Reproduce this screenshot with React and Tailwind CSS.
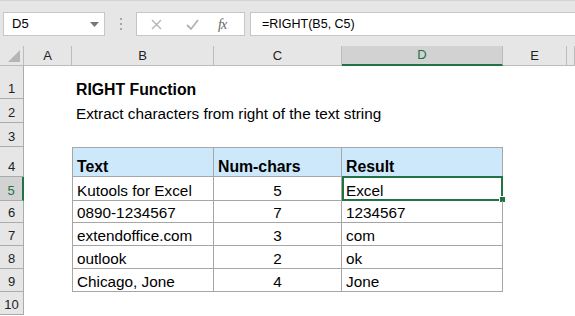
import React from "react";

const columns = [
  { key: "A", width: "w-[48px]" },
  { key: "B", width: "w-[142px]" },
  { key: "C", width: "w-[128px]" },
  { key: "D", width: "w-[161px]" },
  { key: "E", width: "w-[64px]" },
  { key: "F", width: "flex-1" },
];

const tableRows = [
  { text: "Kutools for Excel", num: "5", result: "Excel" },
  { text: "0890-1234567", num: "7", result: "1234567" },
  { text: "extendoffice.com", num: "3", result: "com" },
  { text: "outlook", num: "2", result: "ok" },
  { text: "Chicago, Jone", num: "4", result: "Jone" },
];

const rowHeights = ["h-[24px]", "h-[22px]", "h-[23px]", "h-[23px]", "h-[23px]"];

function RowHeader({ label, height, active }) {
  return (
    <div
      className={
        "w-[24px] shrink-0 flex items-end justify-center pb-[2px] text-[13px] leading-[14px] border-b " +
        height +
        (active
          ? " bg-[#d2d2d2] border-b-[#ababab] border-r-2 border-r-[#217346] text-[#217346]"
          : " bg-[#e6e6e6] border-b-[#ababab] border-r border-r-[#ababab] text-[#222]")
      }
    >
      {label}
    </div>
  );
}

function TextCell({ width, className = "", children }) {
  return (
    <div className={"shrink-0 flex items-end px-[4px] pb-[1px] leading-[17px] " + width + " " + className}>
      {children}
    </div>
  );
}

export default function App() {
  return (
    <div className="w-[575px] h-[316px] overflow-hidden bg-white font-['Liberation_Sans',Arial,sans-serif] text-black">
      {/* formula bar */}
      <div className="h-[46px] bg-[#e6e6e6] border-t border-[#d4d4d4] flex items-start pt-[11px] pl-[3px]">
        <div className="w-[102px] h-[24px] bg-white border border-[#c6c6c6] flex items-center justify-between pl-[8px] pr-[5px] text-[13px]">
          <span>D5</span>
          <svg width="9" height="5" viewBox="0 0 9 5">
            <polygon points="0,0 9,0 4.5,5" fill="#777" />
          </svg>
        </div>
        <div className="w-[31px] h-[24px] flex flex-col items-center justify-center gap-[3px]">
          <span className="w-[2px] h-[2px] bg-[#a8a8a8]" />
          <span className="w-[2px] h-[2px] bg-[#a8a8a8]" />
          <span className="w-[2px] h-[2px] bg-[#a8a8a8]" />
        </div>
        <div className="w-[109px] h-[24px] bg-white border border-[#c6c6c6] flex items-center">
          <svg className="ml-[14px]" width="11" height="11" viewBox="0 0 11 11">
            <path d="M1 1 L10 10 M10 1 L1 10" stroke="#b4b4b4" strokeWidth="1.4" />
          </svg>
          <svg className="ml-[24px]" width="13" height="11" viewBox="0 0 13 11">
            <path d="M1 6 L5 10 L12 1" stroke="#b4b4b4" strokeWidth="1.8" fill="none" />
          </svg>
          <span className="ml-[19px] font-['Liberation_Serif',serif] italic text-[14px] text-[#666] tracking-[-1px]">
            fx
          </span>
        </div>
        <div className="flex-1 h-[24px] ml-[5px] bg-white border border-[#c6c6c6] border-r-0 flex items-center pl-[11px] text-[12.5px]">
          =RIGHT(B5, C5)
        </div>
      </div>

      {/* column headers */}
      <div className="flex h-[20px] bg-[#e6e6e6] text-[13px] text-[#222]">
        <div className="w-[24px] shrink-0 border-r border-b border-[#bcbcbc] flex items-end justify-end pr-[3px] pb-[3px]">
          <svg width="12" height="12" viewBox="0 0 12 12">
            <polygon points="12,0 12,12 0,12" fill="#b5b5b5" />
          </svg>
        </div>
        {columns.map((col) =>
          col.key === "D" ? (
            <div
              key={col.key}
              className={col.width + " shrink-0 bg-[#d2d2d2] border-r border-r-[#bcbcbc] border-b-2 border-b-[#217346] flex items-center justify-center text-[#217346]"}
            >
              {col.key}
            </div>
          ) : (
            <div
              key={col.key}
              className={col.width + " shrink-0 border-r border-b border-[#bcbcbc] flex items-center justify-center"}
            >
              {col.key === "F" ? "" : col.key}
            </div>
          )
        )}
      </div>

      {/* sheet body */}
      <div className="text-[15.3px]">
        <div className="flex h-[33px]">
          <RowHeader label="1" height="h-[33px]" />
          <div className="w-[48px] shrink-0" />
          <TextCell width="w-[300px]" className="font-bold text-[15.8px]">
            RIGHT Function
          </TextCell>
        </div>
        <div className="flex h-[24px]">
          <RowHeader label="2" height="h-[24px]" />
          <div className="w-[48px] shrink-0" />
          <TextCell width="w-[420px]">Extract characters from right of the text string</TextCell>
        </div>
        <div className="flex h-[24px]">
          <RowHeader label="3" height="h-[24px]" />
        </div>
        <div className="flex h-[30px]">
          <RowHeader label="4" height="h-[30px]" />
          <div className="w-[48px] shrink-0" />
          <TextCell width="w-[142px]" className="font-bold text-[15.8px] bg-[#cde8fb] border border-[#a6a6a6]">
            Text
          </TextCell>
          <TextCell width="w-[128px]" className="font-bold text-[15.8px] bg-[#cde8fb] border-y border-r border-[#a6a6a6]">
            Num-chars
          </TextCell>
          <TextCell width="w-[161px]" className="font-bold text-[15.8px] bg-[#cde8fb] border-y border-r border-[#a6a6a6]">
            Result
          </TextCell>
        </div>
        {tableRows.map((row, i) => (
          <div key={row.text} className={"flex " + rowHeights[i]}>
            <RowHeader label={String(i + 5)} height={rowHeights[i]} active={i === 0} />
            <div className="w-[48px] shrink-0" />
            <TextCell width="w-[142px]" className="border-x border-b border-[#a6a6a6]">
              {row.text}
            </TextCell>
            <TextCell width="w-[128px]" className="justify-center border-r border-b border-[#a6a6a6]">
              {row.num}
            </TextCell>
            <TextCell width="w-[161px]" className="relative border-r border-b border-[#a6a6a6]">
              {row.result}
              {i === 0 && (
                <>
                  <div className="absolute left-0 -top-[1px] -right-[1px] -bottom-[1px] border-2 border-[#217346]" />
                  <div className="absolute -right-[4px] -bottom-[3px] w-[7px] h-[7px] bg-[#217346] border border-white" />
                </>
              )}
            </TextCell>
          </div>
        ))}
        <div className="flex h-[23px]">
          <RowHeader label="10" height="h-[23px]" />
        </div>
      </div>
    </div>
  );
}
